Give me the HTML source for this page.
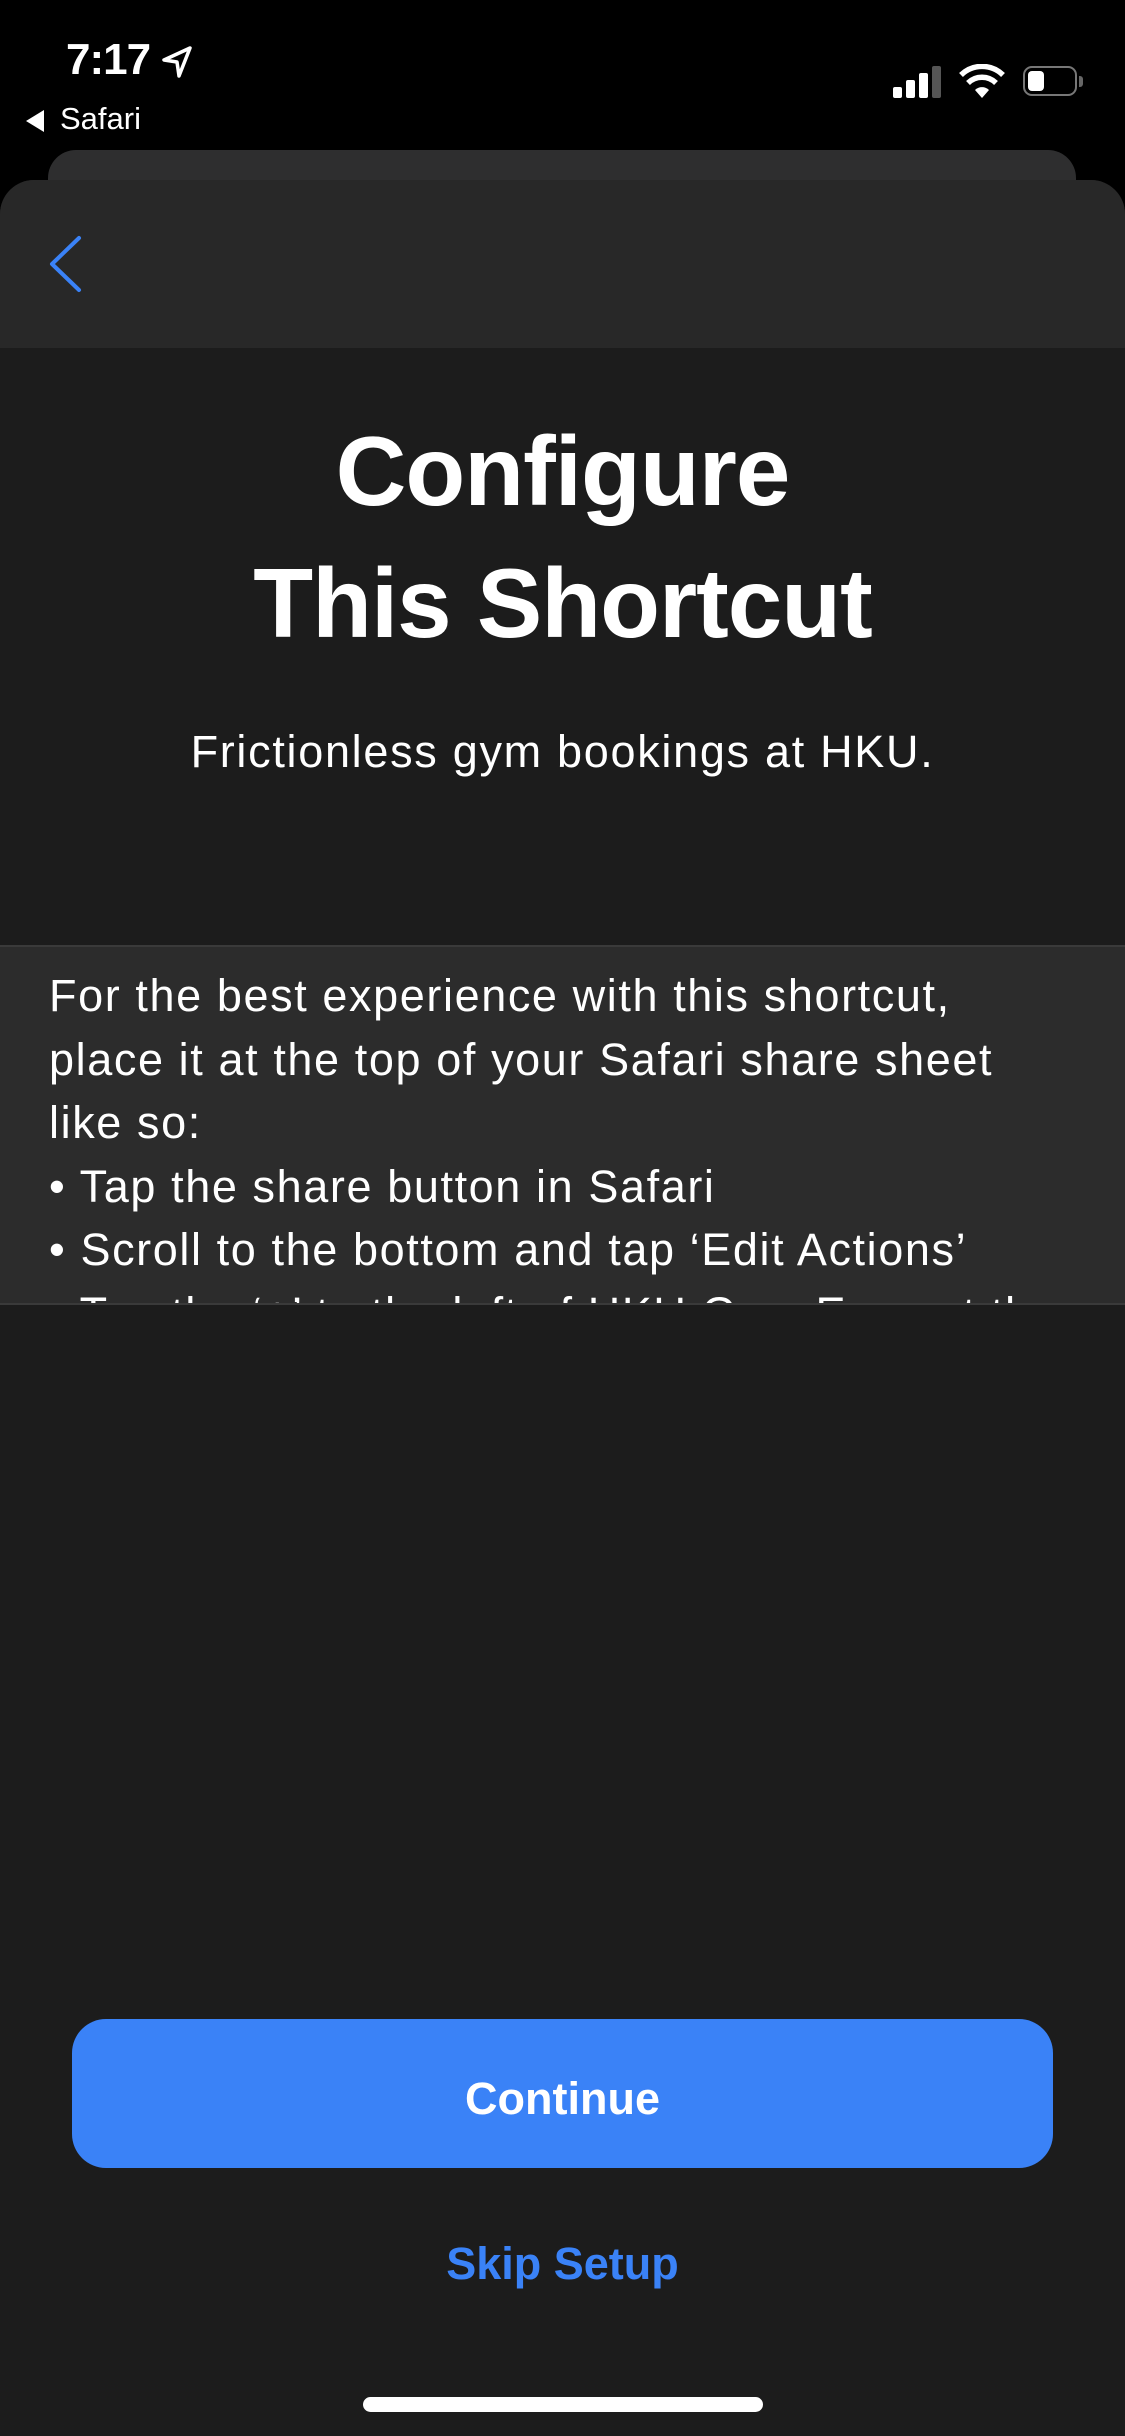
<!DOCTYPE html>
<html><head><meta charset="utf-8"><style>
html,body{margin:0;padding:0;background:#000;}
body{width:1125px;height:2436px;position:relative;overflow:hidden;font-family:"Liberation Sans",sans-serif;color:#fff;}
.abs{position:absolute;}
.t{position:absolute;white-space:nowrap;line-height:1;}
</style></head><body>
<div class="t" style="left:66px;top:38px;font-size:44px;font-weight:bold;letter-spacing:-1px;">7:17</div>
<svg class="abs" style="left:160px;top:44px" width="34" height="36" viewBox="0 0 34 36"><path d="M30 4 L4 16 L17 18 L19 32 Z" fill="none" stroke="#fff" stroke-width="3.5" stroke-linejoin="round"/></svg>
<svg class="abs" style="left:26px;top:110px" width="20" height="22"><path d="M0 11 L18 0 L18 22 Z" fill="#fff"/></svg>
<div class="t" style="left:60px;top:103px;font-size:31px;">Safari</div>
<div class="abs" style="left:893px;top:87px;width:9px;height:11px;background:#fff;border-radius:2px"></div>
<div class="abs" style="left:906px;top:80px;width:9px;height:18px;background:#fff;border-radius:2px"></div>
<div class="abs" style="left:919px;top:73px;width:9px;height:25px;background:#fff;border-radius:2px"></div>
<div class="abs" style="left:932px;top:66px;width:9px;height:32px;background:#555;border-radius:2px"></div>
<svg class="abs" style="left:958px;top:64px" width="48" height="36" viewBox="0 0 48 36"><path d="M24 34 L17 26 A10 10 0 0 1 31 26 Z" fill="#fff"/><path d="M10 19 A20 20 0 0 1 38 19" fill="none" stroke="#fff" stroke-width="5.5"/><path d="M3 11 A30 30 0 0 1 45 11" fill="none" stroke="#fff" stroke-width="5.5"/></svg>
<div class="abs" style="left:1023px;top:66px;width:54px;height:30px;border:2.5px solid #777;border-radius:9px;box-sizing:border-box"></div>
<div class="abs" style="left:1028px;top:71px;width:16px;height:20px;background:#fff;border-radius:4px"></div>
<div class="abs" style="left:1079px;top:76px;width:4px;height:11px;background:#666;border-radius:0 3px 3px 0"></div>
<div class="abs" style="left:48px;top:150px;width:1028px;height:80px;background:#2e2e2f;border-radius:28px 28px 0 0"></div>
<div class="abs" style="left:0;top:180px;width:1125px;height:2256px;background:#1c1c1c;border-radius:34px 34px 0 0;overflow:hidden">
 <div class="abs" style="left:0;top:0;width:1125px;height:168px;background:#282828"></div>
</div>
<svg class="abs" style="left:46px;top:234px" width="40" height="60" viewBox="0 0 40 60"><path d="M33 4 L6 30 L33 56" fill="none" stroke="#3a82f7" stroke-width="4" stroke-linecap="round" stroke-linejoin="round"/></svg>
<div class="t" style="left:0;width:1125px;text-align:center;top:422px;font-size:98px;font-weight:bold;letter-spacing:-1px;">Configure</div>
<div class="t" style="left:0;width:1125px;text-align:center;top:554px;font-size:98px;font-weight:bold;letter-spacing:-1px;">This Shortcut</div>
<div class="t" style="left:0;width:1125px;text-align:center;top:729px;font-size:45px;letter-spacing:1.7px;">Frictionless gym bookings at HKU.</div>
<div class="abs" style="left:0;top:945px;width:1125px;height:360px;background:#2c2c2c;border-top:2px solid #3a3a3a;border-bottom:2px solid #3a3a3a;box-sizing:border-box;overflow:hidden">
 <div class="abs" style="left:49px;top:17px;font-size:45px;line-height:63.5px;white-space:nowrap;letter-spacing:1.6px">For the best experience with this shortcut,<br>place it at the top of your Safari share sheet<br>like so:<br>• Tap the share button in Safari<br>• Scroll to the bottom and tap ‘Edit Actions’<br>• Tap the ‘+’ to the left of HKU Gym Easy at the</div>
</div>
<div class="abs" style="left:72px;top:2019px;width:981px;height:149px;background:#3a82f7;border-radius:34px"></div>
<div class="t" style="left:0;width:1125px;text-align:center;top:2076px;font-size:45px;font-weight:bold;">Continue</div>
<div class="t" style="left:0;width:1125px;text-align:center;top:2241px;font-size:45px;font-weight:bold;color:#3a82f7;">Skip Setup</div>
<div class="abs" style="left:363px;top:2397px;width:400px;height:15px;background:#fff;border-radius:8px"></div>
</body></html>
